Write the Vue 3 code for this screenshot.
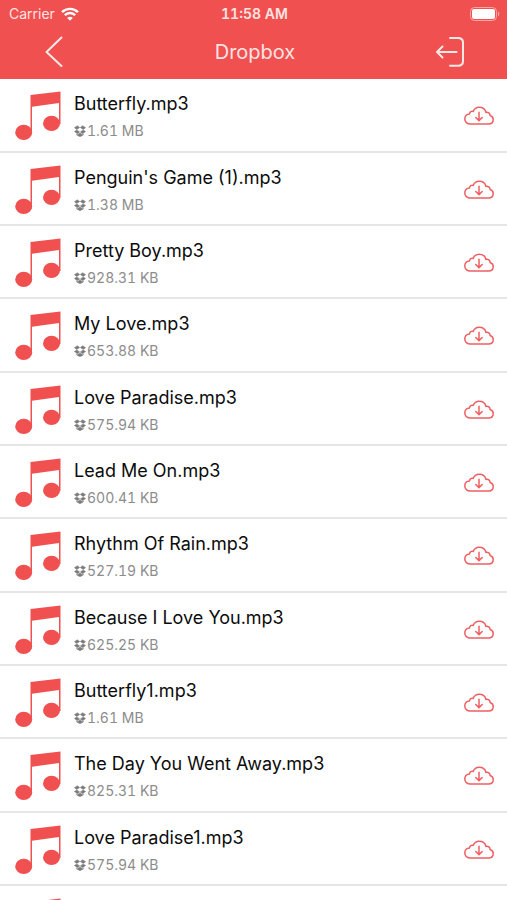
<script setup>
const files = [
  { name: 'Butterfly.mp3', size: '1.61 MB' },
  { name: "Penguin's Game (1).mp3", size: '1.38 MB' },
  { name: 'Pretty Boy.mp3', size: '928.31 KB' },
  { name: 'My Love.mp3', size: '653.88 KB' },
  { name: 'Love Paradise.mp3', size: '575.94 KB' },
  { name: 'Lead Me On.mp3', size: '600.41 KB' },
  { name: 'Rhythm Of Rain.mp3', size: '527.19 KB' },
  { name: 'Because I Love You.mp3', size: '625.25 KB' },
  { name: 'Butterfly1.mp3', size: '1.61 MB' },
  { name: 'The Day You Went Away.mp3', size: '825.31 KB' },
  { name: 'Love Paradise1.mp3', size: '575.94 KB' },
  { name: '', size: '' },
]
</script>

<template>
  <div class="screen">
    <header class="top">
      <div class="status">
        <div class="carrier">
          <span>Carrier</span>
          <svg class="wifi" viewBox="0 0 18 14" aria-hidden="true">
            <path d="M1 5.2C5.500.8 12.500.8 17 5.200" />
            <path d="M3.800 8.200C6.800 5.300 11.200 5.300 14.200 8.200" />
            <path class="dot" d="M9 13.800L6.200 10.900C7.800 9.500 10.200 9.500 11.800 10.900Z" />
          </svg>
        </div>
        <span class="clock">11:58 AM</span>
        <svg class="battery" viewBox="0 0 30 14" aria-hidden="true">
          <rect class="shell" x="0.500" y="0.500" width="26" height="13" rx="4" />
          <rect class="charge" x="2" y="2" width="23" height="10" rx="2" />
          <path class="tip" d="M28 4.500C29.700 5.200 29.700 8.800 28 9.500Z" />
        </svg>
      </div>
      <nav class="bar">
        <button class="nav-button back" type="button" aria-label="Back">
          <svg viewBox="0 0 18 32" width="18" height="32"><path d="M16.500 1.500L1.500 16L16.500 30" /></svg>
        </button>
        <h1>Dropbox</h1>
        <button class="nav-button exit" type="button" aria-label="Sign out">
          <svg viewBox="0 0 30 32" width="30" height="32">
            <path d="M15 2H23Q28 2 28 6.500V25Q28 29.800 23 29.800H15" />
            <path d="M21.500 16H2M7.500 10.500L2 16L7.500 21.500" />
          </svg>
        </button>
      </nav>
    </header>

    <ul class="files">
      <li v-for="(file, i) in files" :key="i" class="file">
        <svg class="note" viewBox="0 0 46 50" aria-hidden="true">
          <path d="M15.500 3L45.500 -0.500V32H44V11L17 14.800V41H15.500Z" />
          <ellipse cx="8.700" cy="40.400" rx="8.500" ry="7.700" />
          <ellipse cx="36.500" cy="31.400" rx="8.500" ry="7.700" />
        </svg>
        <template v-if="file.name">
          <div class="info">
            <span class="name">{{ file.name }}</span>
            <span class="size">
              <svg class="box" viewBox="0 0 12 12" aria-hidden="true">
                <path d="M3.300.8L5.700 2.500L2.800 4.400L.4 2.700ZM8.700.8L11.600 2.700L9.200 4.400L6.300 2.500ZM.4 6.500L2.800 4.900L5.700 7L3.300 8.700ZM11.600 6.500L9.200 4.900L6.300 7L8.700 8.700ZM2.600 9.300L3.400 9.700L6 8L8.600 9.700L9.400 9.300V9.900L6 11.700L2.600 9.900Z" />
              </svg>
              {{ file.size }}
            </span>
          </div>
          <button class="download" type="button" :aria-label="'Download ' + file.name">
            <svg viewBox="0 0 30 20" width="30" height="20">
              <path d="M6.500 18C3 18 .8 15.900.8 13C.8 10.200 2.700 8.200 5.500 8C5.700 5.800 7.300 5 9.200 5.400C10.200 2.700 12.400 1.200 15.200 1.200C18.800 1.200 21.300 3.400 21.900 6.400C24.300 5.900 26 7.300 26.100 9.400C28.100 9.900 29.200 11.500 29.200 13.500C29.200 16.200 27.300 18 24.500 18Z" />
              <path d="M15 6.200V14.500M11.800 11.500L15 14.600L18.200 11.500" />
            </svg>
          </button>
        </template>
      </li>
    </ul>
  </div>
</template>

<style>
body {
  margin: 0;
  background: #fff;
}
</style>

<style scoped>
.screen {
  height: 100vh;
  overflow: hidden;
  background: #fff;
  font-family: Inter, "Liberation Sans", sans-serif;
}

.top {
  height: 79px;
  background: #f15050;
  color: #ffe4e2;
}

.status {
  display: grid;
  grid-template-columns: 1fr auto 1fr;
  align-items: center;
  height: 27px;
  padding: 0 7px 0 9px;
  font-size: 14px;
  line-height: 27px;
}

.carrier {
  display: flex;
  align-items: center;
  gap: 6px;
}

.wifi {
  width: 18px;
  height: 14px;
  fill: none;
  stroke: #fff;
  stroke-width: 2.4;
}

.wifi .dot {
  fill: #fff;
  stroke: none;
}

.clock {
  font-weight: 600;
  font-variant-numeric: tabular-nums;
}

.battery {
  justify-self: end;
  width: 30px;
  height: 14px;
}

.shell {
  fill: none;
  stroke: #f9a6a4;
}

.charge {
  fill: #fff;
}

.tip {
  fill: #f9a6a4;
}

.bar {
  display: grid;
  grid-template-columns: 1fr auto 1fr;
  align-items: center;
  height: 50px;
  padding: 0 42px 0 45px;
}

h1 {
  margin: 0;
  font-size: 20px;
  line-height: 24px;
  font-weight: 400;
}

button {
  display: flex;
  padding: 0;
  border: 0;
  background: none;
  cursor: pointer;
}

button svg {
  fill: none;
  stroke-linecap: round;
  stroke-linejoin: round;
}

.nav-button svg {
  stroke: #ffe9e6;
  stroke-width: 2;
}

.back {
  justify-self: start;
}

.exit {
  justify-self: end;
}

.files {
  margin: 0;
  padding: 0;
  list-style: none;
}

.file {
  display: flex;
  align-items: flex-start;
  box-sizing: border-box;
  height: 73px;
  padding: 13px 13px 0 15px;
  border-bottom: 2px solid #e6e6e6;
}

.file:nth-child(3n + 1) {
  height: 74px;
}

.note {
  flex: none;
  width: 46px;
  height: 50px;
  overflow: visible;
  fill: #f15050;
}

.info {
  display: flex;
  flex: 1;
  flex-direction: column;
  gap: 6px;
  min-width: 0;
  padding-left: 13px;
}

.name {
  color: #0c0c0c;
  font-size: 18px;
  line-height: 24px;
  white-space: nowrap;
}

.size {
  display: flex;
  align-items: center;
  gap: 1px;
  color: #8c8c8c;
  font-size: 14px;
  font-variant-numeric: tabular-nums;
  line-height: 18px;
}

.box {
  width: 12px;
  height: 12px;
  fill: #7c7c7c;
  stroke: #7c7c7c;
  stroke-width: 0.5;
}

.download {
  margin-top: 14px;
}

.download svg {
  stroke: #ee5f62;
  stroke-width: 1.500;
}
</style>
